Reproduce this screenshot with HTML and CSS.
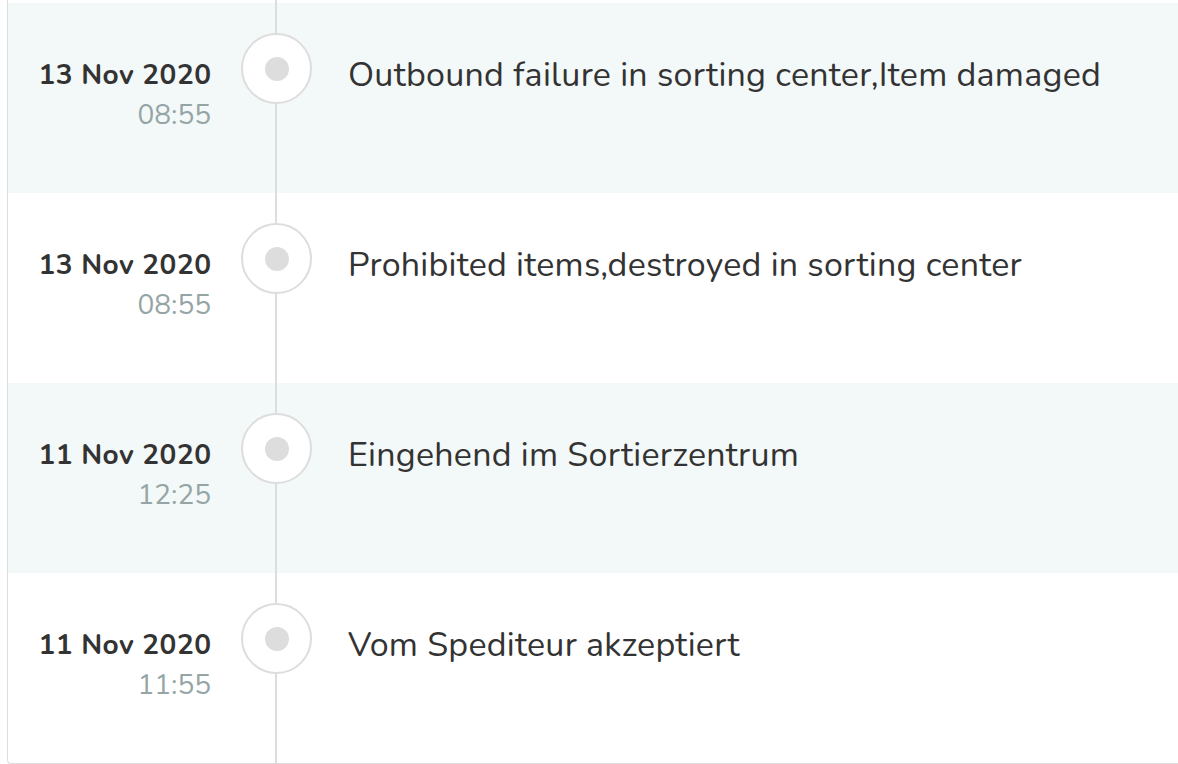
FILE: index.html
```html
<!DOCTYPE html>
<html lang="en">
<head>
    <meta charset="UTF-8">
    <meta name="viewport" content="width=device-width, initial-scale=1.0">
    <title>Tracking history</title>
    <link rel="stylesheet" href="styles.css">
</head>
<body>

<div class="tracking">
    <div class="event shaded">
        <div class="event-date">
            <span class="day">13 Nov 2020</span>
            <span class="time">08:55</span>
        </div>
        <div class="marker"><span class="dot"></span></div>
        <div class="event-text">Outbound failure in sorting center,Item damaged</div>
    </div>
    <div class="event">
        <div class="event-date">
            <span class="day">13 Nov 2020</span>
            <span class="time">08:55</span>
        </div>
        <div class="marker"><span class="dot"></span></div>
        <div class="event-text">Prohibited items,destroyed in sorting center</div>
    </div>
    <div class="event shaded">
        <div class="event-date">
            <span class="day">11 Nov 2020</span>
            <span class="time">12:25</span>
        </div>
        <div class="marker"><span class="dot"></span></div>
        <div class="event-text">Eingehend im Sortierzentrum</div>
    </div>
    <div class="event">
        <div class="event-date">
            <span class="day">11 Nov 2020</span>
            <span class="time">11:55</span>
        </div>
        <div class="marker"><span class="dot"></span></div>
        <div class="event-text">Vom Spediteur akzeptiert</div>
    </div>
</div>

</body>
</html>
```

FILE: styles.css
```css
/* Basic reset */
* {
    margin: 0;
    padding: 0;
    box-sizing: border-box;
}

body {
    font-family: 'Nunito', 'Lato', 'Open Sans', sans-serif;
    background-color: #fff;
    color: #333;
}

/* Timeline card */
.tracking {
    position: relative;
    margin-left: 7px;
    padding-top: 3px;
    border-left: 1px solid #ddd;
    border-bottom: 1px solid #ddd;
    border-bottom-left-radius: 4px;
}

/* Vertical line running behind the markers */
.tracking::before {
    content: '';
    position: absolute;
    top: 0;
    bottom: 0;
    left: 267px;
    width: 2px;
    background-color: #ddd;
}

.event {
    display: grid;
    grid-template-columns: 203px 71px 1fr;
    height: 190px;
    padding-top: 30px;
}

.event.shaded {
    background-color: #f3f8f8;
}

/* Date and time column */
.event-date {
    display: flex;
    flex-direction: column;
    align-items: flex-end;
    padding-top: 22px;
}

.event-date .day {
    font-size: 28px;
    font-weight: bold;
    line-height: 40px;
    letter-spacing: 0.5px;
    margin-right: -0.5px;
    color: #333;
}

.event-date .time {
    font-size: 28px;
    line-height: 40px;
    color: #95a5a6;
}

/* Circle on the line */
.marker {
    position: relative;
    z-index: 1;
    width: 71px;
    height: 71px;
    margin-left: 30px;
    border: 2px solid #ddd;
    border-radius: 50%;
    background-color: #fff;
    display: flex;
    align-items: center;
    justify-content: center;
}

.marker .dot {
    width: 24px;
    height: 24px;
    border-radius: 50%;
    background-color: #ddd;
}

.event-text {
    margin-left: 66px;
    padding-top: 22px;
    font-size: 34px;
    line-height: 40px;
    letter-spacing: 0.25px;
    color: #333;
    white-space: nowrap;
}
```
